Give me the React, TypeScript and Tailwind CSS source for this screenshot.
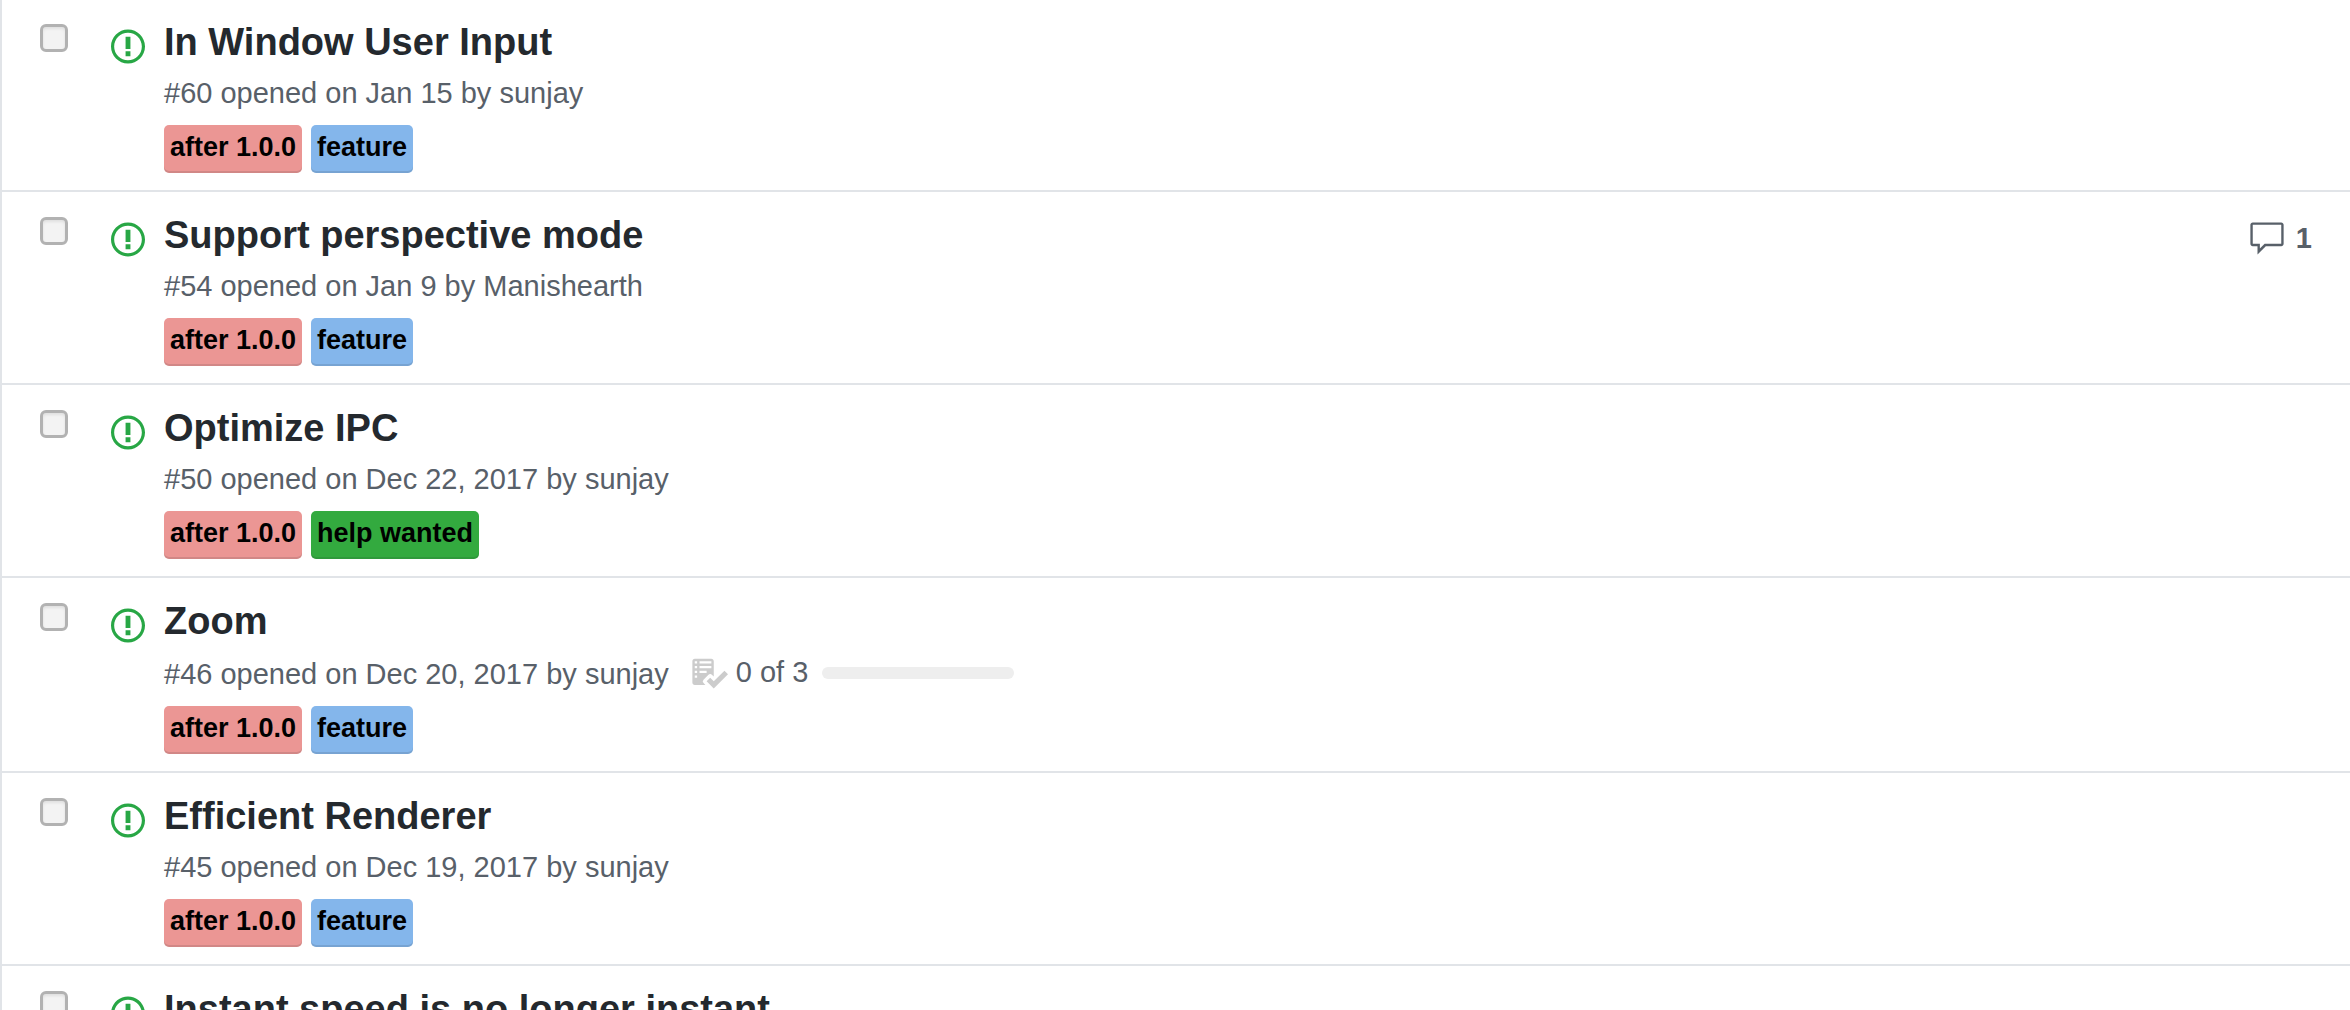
type Label = 'after 1.0.0' | 'feature' | 'help wanted';

interface Issue {
  title: string;
  number?: number;
  date?: string;
  author?: string;
  labels?: Label[];
  comments?: number;
  tasks?: { done: number; total: number };
}

const issues: Issue[] = [
  { number: 60, title: 'In Window User Input', date: 'Jan 15', author: 'sunjay', labels: ['after 1.0.0', 'feature'] },
  {
    number: 54,
    title: 'Support perspective mode',
    date: 'Jan 9',
    author: 'Manishearth',
    labels: ['after 1.0.0', 'feature'],
    comments: 1,
  },
  { number: 50, title: 'Optimize IPC', date: 'Dec 22, 2017', author: 'sunjay', labels: ['after 1.0.0', 'help wanted'] },
  {
    number: 46,
    title: 'Zoom',
    date: 'Dec 20, 2017',
    author: 'sunjay',
    labels: ['after 1.0.0', 'feature'],
    tasks: { done: 0, total: 3 },
  },
  { number: 45, title: 'Efficient Renderer', date: 'Dec 19, 2017', author: 'sunjay', labels: ['after 1.0.0', 'feature'] },
  { title: 'Instant speed is no longer instant' },
];

const labelColors: Record<Label, string> = {
  'after 1.0.0': 'bg-[#eb9694]',
  feature: 'bg-[#84b6eb]',
  'help wanted': 'bg-[#33aa3f]',
};

function IssueOpenedIcon() {
  return (
    <svg viewBox="0 0 14 16" className="h-[39px] w-[34px] fill-[#28a745]" aria-label="Open issue">
      <path
        fillRule="evenodd"
        d="M7 2.3c3.14 0 5.7 2.56 5.7 5.7s-2.56 5.7-5.7 5.7A5.71 5.71 0 0 1 1.3 8c0-3.14 2.56-5.7 5.7-5.7zM7 1C3.14 1 0 4.14 0 8s3.14 7 7 7 7-3.14 7-7-3.14-7-7-7zm1 3H6v5h2V4zm0 6H6v2h2v-2z"
      />
    </svg>
  );
}

function CommentIcon() {
  return (
    <svg viewBox="0 0 16 16" className="size-[38px] fill-current" aria-hidden="true">
      <path
        fillRule="evenodd"
        d="M14 1H2c-.55 0-1 .45-1 1v8c0 .55.45 1 1 1h2v3.5L7.5 11H14c.55 0 1-.45 1-1V2c0-.55-.45-1-1-1zm0 9H7l-2 2v-2H2V2h12v8z"
      />
    </svg>
  );
}

function ChecklistIcon() {
  return (
    <svg viewBox="0 0 16 16" className="size-[38px] fill-[#cccccc]" aria-hidden="true">
      <path
        fillRule="evenodd"
        d="M16 8.5l-6 6-3-3L8.5 10l1.5 1.5L14.5 7 16 8.5zM5.7 12.2l.8.8H2c-.55 0-1-.45-1-1V3c0-.55.45-1 1-1h7c.55 0 1 .45 1 1v6.5l-.8-.8c-.39-.39-1.03-.39-1.42 0L5.7 10.8a.996.996 0 0 0 0 1.41v-.01zM4 4h5V3H4v1zm0 2h5V5H4v1zm0 2h3V7H4v1zM3 9H2v1h1V9zm0-2H2v1h1V7zm0-2H2v1h1V5zm0-2H2v1h1V3z"
      />
    </svg>
  );
}

function TaskProgress({ done, total }: { done: number; total: number }) {
  return (
    <span className="flex h-[46px] items-center">
      <ChecklistIcon />
      <span className="ml-2 self-start">
        {done} of {total}
      </span>
      <span className="ml-[14px] h-3 w-48 overflow-hidden rounded-full bg-[#eeeeee]">
        <span className="block h-full bg-[#cccccc]" style={{ width: `${(done / total) * 100}%` }} />
      </span>
    </span>
  );
}

function IssueRow({ issue }: { issue: Issue }) {
  return (
    <li className="flex items-start border-b-2 border-[#e1e4e8] pb-[17px]">
      <input
        type="checkbox"
        aria-label={`Select ${issue.title}`}
        className="mt-[25px] ml-[38px] size-7 shrink-0 appearance-none rounded-md border-[3px] border-[#b2b2b2] bg-[#f3f3f3] shadow-[inset_0_2px_3px_rgba(0,0,0,0.08)]"
      />
      <div className="mt-7 ml-[43px] shrink-0">
        <IssueOpenedIcon />
      </div>
      <div className="min-w-0 flex-1 pt-[19px] pl-[19px]">
        <h3 className="text-[38px] leading-[48px] font-bold text-[#24292e]">
          <a href="#issue">{issue.title}</a>
        </h3>
        {issue.author && (
          <div className="mt-[5px] flex items-end gap-[21px] text-[29px] leading-[44px] text-[#586069]">
            <span>
              #{issue.number} opened on {issue.date} by <a href={`#${issue.author}`}>{issue.author}</a>
            </span>
            {issue.tasks && <TaskProgress done={issue.tasks.done} total={issue.tasks.total} />}
          </div>
        )}
        {issue.labels && (
          <div className="mt-[10px] flex gap-[9px]">
            {issue.labels.map((label) => (
              <a
                key={label}
                href={`#${label.replace(' ', '-')}`}
                className={`rounded-[5px] px-[6px] pb-1 text-[27px] leading-[44px] font-bold text-black shadow-[inset_0_-2px_0_rgba(27,31,35,0.12)] ${labelColors[label]}`}
              >
                {label}
              </a>
            ))}
          </div>
        )}
      </div>
      {issue.comments && (
        <a
          href="#comments"
          className="mt-7 mr-[38px] flex gap-[10px] text-[29px] leading-[36px] font-bold text-[#586069]"
        >
          <CommentIcon />
          {issue.comments}
        </a>
      )}
    </li>
  );
}

export default function App() {
  return (
    <main className="h-screen overflow-hidden bg-white font-['Liberation_Sans',Arial,sans-serif]">
      <ul className="-mt-px border-l-2 border-[#e1e4e8]">
        {issues.map((issue) => (
          <IssueRow key={issue.title} issue={issue} />
        ))}
      </ul>
    </main>
  );
}
